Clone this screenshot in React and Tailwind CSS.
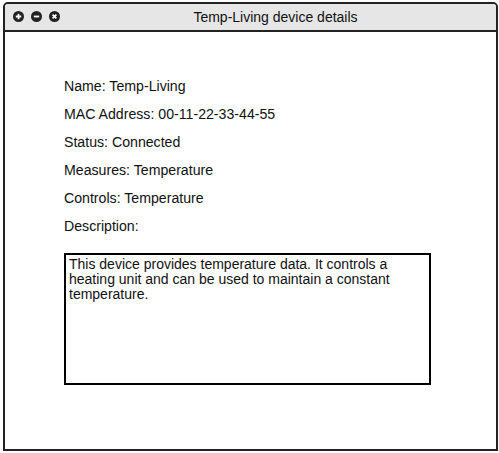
const fields = [
  ['Name', 'Temp-Living'],
  ['MAC Address', '00-11-22-33-44-55'],
  ['Status', 'Connected'],
  ['Measures', 'Temperature'],
  ['Controls', 'Temperature'],
];

function WinButton({ kind }) {
  return (
    <svg width="11" height="11" viewBox="0 0 11 11">
      <circle cx="5.5" cy="5.5" r="5.5" fill="#222" />
      {kind === 'plus' && <path d="M5.5 2.8v5.4M2.8 5.5h5.4" stroke="#fff" strokeWidth="1.8" />}
      {kind === 'minus' && <path d="M2.8 5.5h5.4" stroke="#fff" strokeWidth="1.8" />}
      {kind === 'close' && <path d="M3.6 3.6l3.8 3.8M7.4 3.6l-3.8 3.8" stroke="#fff" strokeWidth="1.7" />}
    </svg>
  );
}

export default function App() {
  return (
    <div className="h-[453px] w-[499px] bg-white pl-[3px] pt-[2px] font-['Liberation_Sans',Arial,sans-serif] text-[14px] text-[#111]">
      <div className="flex h-[449px] w-[495px] flex-col rounded-t-[5px] border-2 border-[#222]">
        <div className="relative flex h-[28px] items-center rounded-t-[3px] border-b-2 border-[#222] bg-[#e6e6e6]">
          <div className="absolute left-[8px] top-[7px] flex gap-[7px]">
            <WinButton kind="plus" />
            <WinButton kind="minus" />
            <WinButton kind="close" />
          </div>
          <div className="w-full pl-[50px] text-center text-[14px] text-[#111]">Temp-Living device details</div>
        </div>

        <div className="pl-[59px] pt-[40px]">
          {fields.map(([label, value]) => (
            <div key={label} className="text-[14.15px] leading-[28px]">
              {label}: {value}
            </div>
          ))}
          <div className="text-[14.15px] leading-[28px]">Description:</div>
          <div className="mt-[13px] h-[132px] w-[367px] border-2 border-black px-[3px] pt-[2px] text-[14px] leading-[15px]">
            This device provides temperature data. It controls a heating unit and can be used to maintain a constant temperature.
          </div>
        </div>
      </div>
    </div>
  );
}
